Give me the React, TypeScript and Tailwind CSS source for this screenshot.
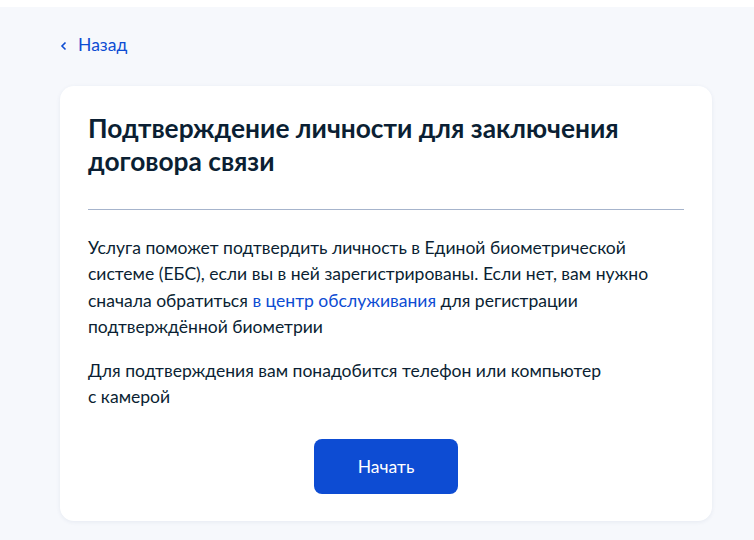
export default function App() {
  return (
    <div className="min-h-[540px] w-[754px] bg-[#f6f8fc] font-['Lato','Liberation_Sans',sans-serif] text-[#0b1f33]">
      <div className="h-[7px] bg-white" />
      <div className="pl-[60px] pt-[26px]">
        <a className="flex items-center gap-[10px] text-[17.55px] leading-[24px] text-[#0d4cd3]">
          <svg width="8" height="10" viewBox="0 0 8 10" className="mt-[1px]">
            <path d="M5.5 1.5 L2 5 L5.5 8.5" fill="none" stroke="#0d4cd3" strokeWidth="1.6" />
          </svg>
          <span>Назад</span>
        </a>
      </div>
      <div className="ml-[60px] mt-[29px] w-[652px] rounded-[14px] bg-white px-[28px] pb-[27px] pt-[26px] shadow-[0_1px_4px_rgba(40,60,120,0.08)]">
        <h1 className="text-[26.3px] font-bold leading-[33px]">
          Подтверждение личности для заключения
          <br />
          договора связи
        </h1>
        <div className="mt-[31px] h-px bg-[#a6b4cc]" />
        <p className="mt-[25px] text-[17.55px] leading-[26.4px]">
          Услуга поможет подтвердить личность в Единой биометрической
          <br />
          системе (ЕБС), если вы в ней зарегистрированы. Если нет, вам нужно
          <br />
          сначала обратиться <span className="text-[#0d4cd3]">в центр обслуживания</span> для регистрации
          <br />
          подтверждённой биометрии
        </p>
        <p className="mt-[17px] text-[17.55px] leading-[26.4px]">
          Для подтверждения вам понадобится телефон или компьютер
          <br />с камерой
        </p>
        <div className="mt-[29px] flex justify-center">
          <button className="h-[55px] w-[144px] rounded-[8px] bg-[#0d4cd3] text-[17.55px] text-white">
            Начать
          </button>
        </div>
      </div>
    </div>
  );
}
